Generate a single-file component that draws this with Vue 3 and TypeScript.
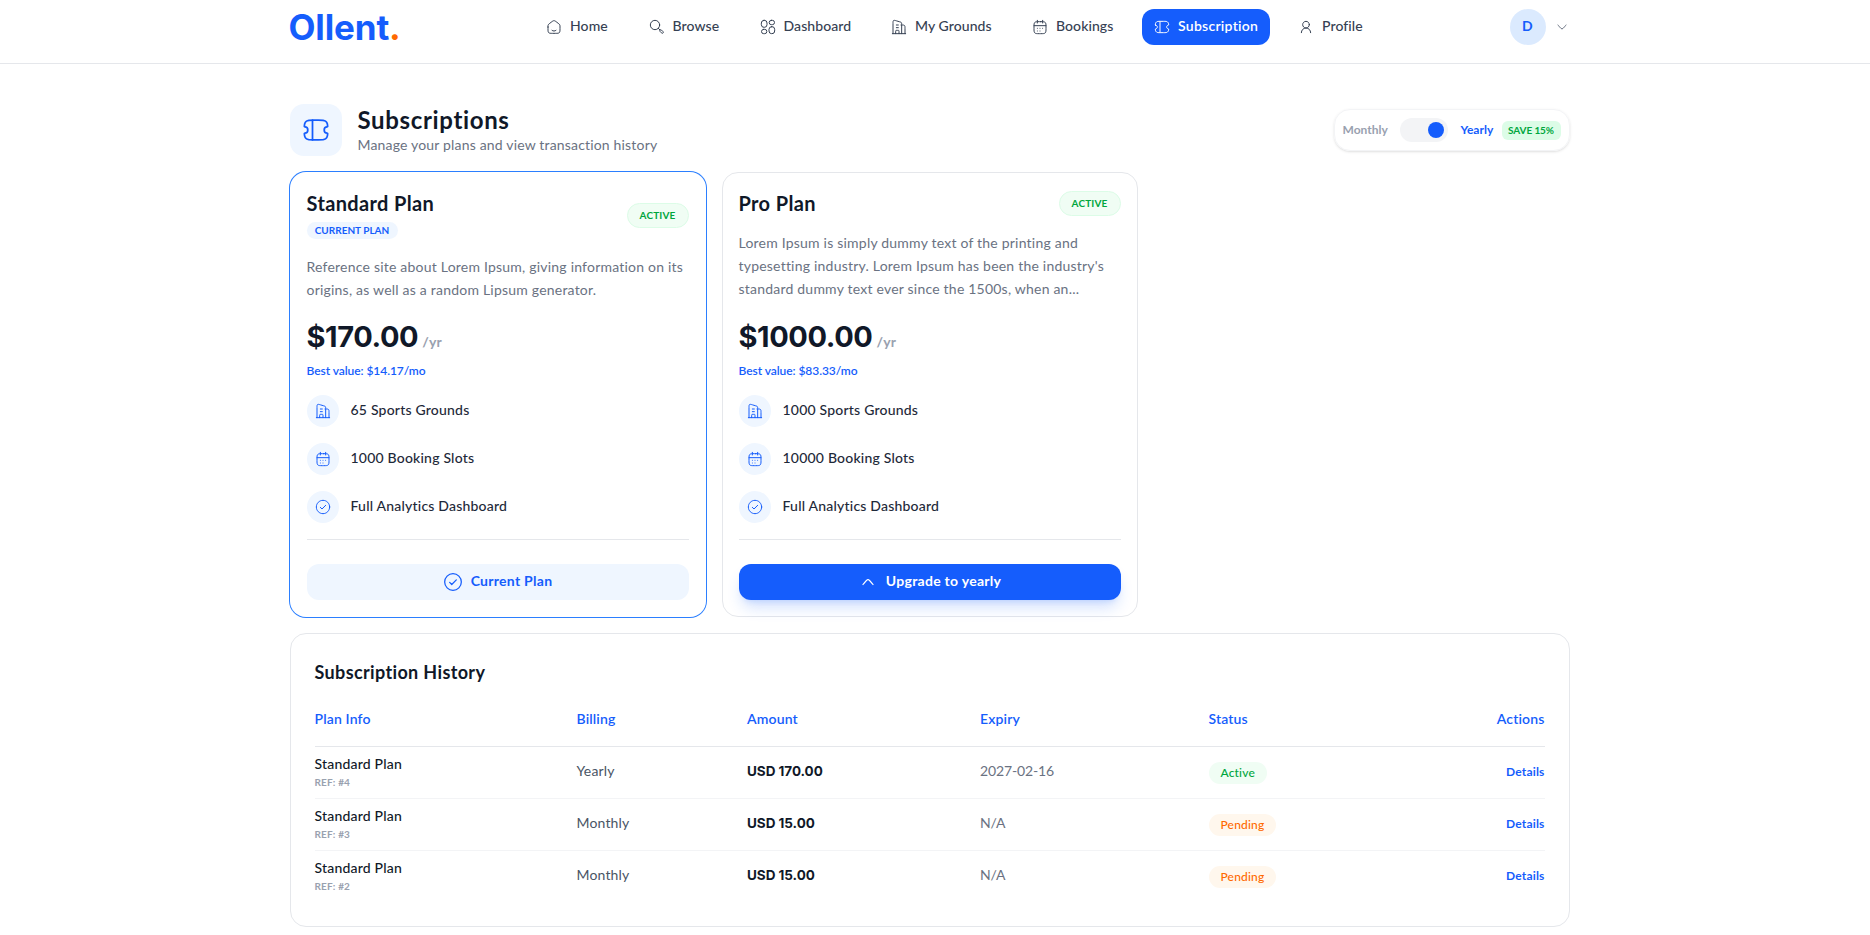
<script setup lang="ts">
import { defineComponent, h } from 'vue'

type IconName = 'home' | 'search' | 'grid' | 'building' | 'calendar' | 'ticket' | 'user' | 'check' | 'up' | 'down'

const shapes: Record<IconName, string[]> = {
  home: [
    'M3 11.99V14.5C3 17.8 3 19.45 4.025 20.475C5.05 21.5 6.7 21.5 10 21.5H14C17.3 21.5 18.95 21.5 19.975 20.475C21 19.45 21 17.8 21 14.5V11.99C21 10.31 21 9.47 20.644 8.742C20.288 8.014 19.625 7.498 18.299 6.467L16.299 4.911C14.236 3.307 13.204 2.5 12 2.5C10.796 2.5 9.764 3.307 7.701 4.911L5.701 6.467C4.375 7.498 3.712 8.014 3.356 8.742C3 9.47 3 10.31 3 11.99Z',
    'M15 17C14.2 17.622 13.15 18 12 18C10.85 18 9.8 17.622 9 17'
  ],
  search: [
    'M14 14L16.5 16.5',
    'M16.433 18.525C15.856 17.948 15.856 17.011 16.433 16.433C17.011 15.856 17.948 15.856 18.525 16.433L21.067 18.975C21.644 19.552 21.644 20.489 21.067 21.067C20.489 21.644 19.552 21.644 18.975 21.067Z',
    'M16 9C16 5.134 12.866 2 9 2C5.134 2 2 5.134 2 9C2 12.866 5.134 16 9 16C12.866 16 16 12.866 16 9Z'
  ],
  grid: [
    'M6 2H6.5A4 4 0 0 1 10.5 6V8.5A4 4 0 0 1 6.5 12.5H6A4 4 0 0 1 2 8.5V6A4 4 0 0 1 6 2Z',
    'M17 2H18.5A3.25 3.25 0 0 1 18.5 8.5H17A3.25 3.25 0 0 1 17 2Z',
    'M5.5 15.5H7A3.25 3.25 0 0 1 7 22H5.5A3.25 3.25 0 0 1 5.5 15.5Z',
    'M17.5 11.5H18A4 4 0 0 1 22 15.5V18A4 4 0 0 1 18 22H17.5A4 4 0 0 1 13.5 18V15.5A4 4 0 0 1 17.5 11.5Z'
  ],
  building: [
    'M2 22H22',
    'M3 22V6.717C3 4.203 3 2.947 3.79 2.323C4.58 1.7 5.742 2.045 8.066 2.736L13.066 4.222C14.468 4.639 15.168 4.847 15.584 5.42C16 5.993 16 6.746 16 8.252V22',
    'M15 9H15.9C18.3 9 19.5 9 20.25 9.732C21 10.464 21 11.643 21 14V22',
    'M8 9H11M8 13H11',
    'M12 22V19C12 18.057 12 17.586 11.707 17.293C11.414 17 10.943 17 10 17H9C8.057 17 7.586 17 7.293 17.293C7 17.586 7 18.057 7 19V22'
  ],
  calendar: [
    'M16 2V6M8 2V6',
    'M13 4H11C7.229 4 5.343 4 4.172 5.172C3 6.343 3 8.229 3 12V14C3 17.771 3 19.657 4.172 20.828C5.343 22 7.229 22 11 22H13C16.771 22 18.657 22 19.828 20.828C21 19.657 21 17.771 21 14V12C21 8.229 21 6.343 19.828 5.172C18.657 4 16.771 4 13 4Z',
    'M3 10H21',
    'M11.995 14H12.005M11.995 18H12.005M15.991 14H16M8 14H8.009M8 18H8.009'
  ],
  ticket: [
    'M2.464 9.344C2.216 9.344 1.989 9.142 2 8.879C2.067 7.337 2.255 6.333 2.78 5.539C3.082 5.082 3.457 4.683 3.889 4.362C5.057 3.494 6.704 3.494 10 3.494H14C17.296 3.494 18.943 3.494 20.111 4.362C20.543 4.683 20.918 5.082 21.22 5.539C21.745 6.333 21.933 7.337 22 8.879C22.011 9.142 21.784 9.344 21.536 9.344C20.152 9.344 19.03 10.533 19.03 12C19.03 13.467 20.152 14.656 21.536 14.656C21.784 14.656 22.011 14.858 22 15.121C21.933 16.663 21.745 17.667 21.22 18.461C20.918 18.918 20.543 19.317 20.111 19.638C18.943 20.506 17.296 20.506 14 20.506H10C6.704 20.506 5.057 20.506 3.889 19.638C3.457 19.317 3.082 18.918 2.78 18.461C2.255 17.667 2.067 16.663 2 15.121C1.989 14.858 2.216 14.656 2.464 14.656C3.848 14.656 4.97 13.467 4.97 12C4.97 10.533 3.848 9.344 2.464 9.344Z',
    'M9 3.5V20.5'
  ],
  user: [
    'M17 8.5C17 5.739 14.761 3.5 12 3.5C9.239 3.5 7 5.739 7 8.5C7 11.261 9.239 13.5 12 13.5C14.761 13.5 17 11.261 17 8.5Z',
    'M19 20.5C19 16.634 15.866 13.5 12 13.5C8.134 13.5 5 16.634 5 20.5'
  ],
  check: [
    'M22 12C22 6.477 17.523 2 12 2C6.477 2 2 6.477 2 12C2 17.523 6.477 22 12 22C17.523 22 22 17.523 22 12Z',
    'M8 12.5L10.5 15L16 9.5'
  ],
  up: ['M18 15C18 15 13.581 9 12 9C10.419 9 6 15 6 15'],
  down: ['M18 9C18 9 13.581 15 12 15C10.419 15 6 9 6 9']
}

const Icon = defineComponent({
  props: { name: { type: String, required: true }, size: { type: Number, default: 16 } },
  setup(props) {
    return () =>
      h(
        'svg',
        {
          width: props.size,
          height: props.size,
          viewBox: '0 0 24 24',
          fill: 'none',
          stroke: 'currentColor',
          'stroke-width': 1.5,
          'stroke-linecap': 'round',
          'stroke-linejoin': 'round'
        },
        shapes[props.name as IconName].map((d) => h('path', { d }))
      )
  }
})

interface NavItem { label: string; icon: IconName; active?: boolean }
const nav: NavItem[] = [
  { label: 'Home', icon: 'home' },
  { label: 'Browse', icon: 'search' },
  { label: 'Dashboard', icon: 'grid' },
  { label: 'My Grounds', icon: 'building' },
  { label: 'Bookings', icon: 'calendar' },
  { label: 'Subscription', icon: 'ticket', active: true },
  { label: 'Profile', icon: 'user' }
]

interface Plan {
  name: string
  current: boolean
  lines: string[]
  price: string
  value: string
  features: { icon: IconName; text: string }[]
}
const plans: Plan[] = [
  {
    name: 'Standard Plan',
    current: true,
    lines: ['Reference site about Lorem Ipsum, giving information on its', 'origins, as well as a random Lipsum generator.'],
    price: '$170.00',
    value: 'Best value: $14.17/mo',
    features: [
      { icon: 'building', text: '65 Sports Grounds' },
      { icon: 'calendar', text: '1000 Booking Slots' },
      { icon: 'check', text: 'Full Analytics Dashboard' }
    ]
  },
  {
    name: 'Pro Plan',
    current: false,
    lines: [
      'Lorem Ipsum is simply dummy text of the printing and',
      "typesetting industry. Lorem Ipsum has been the industry's",
      'standard dummy text ever since the 1500s, when an...'
    ],
    price: '$1000.00',
    value: 'Best value: $83.33/mo',
    features: [
      { icon: 'building', text: '1000 Sports Grounds' },
      { icon: 'calendar', text: '10000 Booking Slots' },
      { icon: 'check', text: 'Full Analytics Dashboard' }
    ]
  }
]

const columns = ['Plan Info', 'Billing', 'Amount', 'Expiry', 'Status', 'Actions']
const history = [
  { plan: 'Standard Plan', ref: '#4', billing: 'Yearly', amount: 'USD 170.00', expiry: '2027-02-16', status: 'Active' },
  { plan: 'Standard Plan', ref: '#3', billing: 'Monthly', amount: 'USD 15.00', expiry: 'N/A', status: 'Pending' },
  { plan: 'Standard Plan', ref: '#2', billing: 'Monthly', amount: 'USD 15.00', expiry: 'N/A', status: 'Pending' }
]
</script>

<template>
  <div class="page">
    <header class="topbar">
      <div class="container topbar-inner">
        <a class="logo">Ollent<span>.</span></a>
        <nav class="nav">
          <a v-for="n in nav" :key="n.label" class="nav-item" :class="{ active: n.active }">
            <Icon :name="n.icon" /><span>{{ n.label }}</span>
          </a>
        </nav>
        <div class="account">
          <span class="avatar"><span>D</span></span>
          <Icon name="down" />
        </div>
      </div>
    </header>

    <main class="container main">
      <div class="heading">
        <div class="tile"><Icon name="ticket" :size="28" /></div>
        <div class="heading-text">
          <h1>Subscriptions</h1>
          <p>Manage your plans and view transaction history</p>
        </div>
        <div class="billing">
          <span class="period">Monthly</span>
          <span class="switch"><i></i></span>
          <span class="period on">Yearly</span>
          <span class="save">SAVE 15%</span>
        </div>
      </div>

      <section class="plans">
        <article v-for="p in plans" :key="p.name" class="plan" :class="{ current: p.current }">
          <div class="plan-head">
            <div>
              <h2>{{ p.name }}</h2>
              <span v-if="p.current" class="chip">CURRENT PLAN</span>
            </div>
            <span class="state">ACTIVE</span>
          </div>
          <p class="desc"><span v-for="l in p.lines" :key="l">{{ l }}</span></p>
          <div class="bottom">
            <div class="price"><b>{{ p.price }}</b><span>/yr</span></div>
            <div class="value">{{ p.value }}</div>
            <ul class="features">
              <li v-for="f in p.features" :key="f.text">
                <span class="dot"><Icon :name="f.icon" /></span><span class="feature-text">{{ f.text }}</span>
              </li>
            </ul>
            <div class="action">
              <button class="btn" :class="p.current ? 'soft' : 'solid'">
                <Icon :name="p.current ? 'check' : 'up'" :size="20" />
                <span>{{ p.current ? 'Current Plan' : 'Upgrade to yearly' }}</span>
              </button>
            </div>
          </div>
        </article>
      </section>

      <section class="history">
        <h3>Subscription History</h3>
        <div class="row head">
          <span v-for="c in columns" :key="c">{{ c }}</span>
        </div>
        <div v-for="r in history" :key="r.ref" class="row">
          <div class="info">
            <div class="info-name">{{ r.plan }}</div>
            <div class="info-ref">REF: {{ r.ref }}</div>
          </div>
          <span class="bill">{{ r.billing }}</span>
          <span class="amount">{{ r.amount }}</span>
          <span class="expiry">{{ r.expiry }}</span>
          <span class="status"><em class="tag" :class="r.status.toLowerCase()">{{ r.status }}</em></span>
          <a class="details">Details</a>
        </div>
      </section>
    </main>
  </div>
</template>

<style>
body { margin: 0; background: #fff; overflow: hidden; }
</style>

<style scoped>
.page {
  font-family: Lato, "Open Sans", sans-serif;
  font-size: 14px;
  line-height: 20px;
  color: #101828;
  letter-spacing: 0.012em;
  height: 935px;
  overflow: hidden;
}
* { box-sizing: border-box; }
h1, h2, h3, p, ul { margin: 0; padding: 0; }
svg { display: block; flex: none; }
.container { width: 1280px; margin-left: calc((100% - 1291px) / 2); }

.topbar { height: 64px; border-bottom: 1px solid #e5e7eb; }
.topbar-inner {
  display: grid;
  grid-template-columns: 244.5px 1fr auto;
  align-items: center;
  height: 54px;
}
.logo {
  margin-left: -1px;
  font: 700 35px/40px Inter, sans-serif;
  letter-spacing: -0.004em;
  color: #155dfc;
}
.logo span { color: #ff6900; }
.nav {
  display: grid;
  grid-template-columns: 102.5px 111px 131.5px 141px 122px 144px 88px;
}
.nav-item {
  display: flex;
  align-items: center;
  gap: 8px;
  justify-self: start;
  height: 36px;
  padding: 0 12px;
  border-radius: 12px;
  font-weight: 500;
  color: #364153;
  letter-spacing: 0.006em;
}
.nav-item span, .avatar span, .btn span, .feature-text { padding-bottom: 2px; }
.nav-item.active {
  width: 128px;
  background: #155dfc;
  color: #fff;
  font-weight: 600;
  letter-spacing: 0.019em;
}
.account { display: flex; align-items: center; gap: 8px; color: #6a7282; }
.avatar {
  display: grid;
  place-items: center;
  width: 36px;
  height: 36px;
  border-radius: 50%;
  background: #dbeafe;
  color: #155dfc;
  font-weight: 700;
}

.main { padding-top: 40px; }
.heading { display: flex; align-items: center; height: 52px; }
.tile {
  display: grid;
  place-items: center;
  width: 52px;
  height: 52px;
  border-radius: 14px;
  background: #eff6ff;
  color: #155dfc;
}
.heading-text { margin-left: 16px; flex: 1; }
.heading-text h1 { font-size: 24px; line-height: 32px; font-weight: 700; letter-spacing: 0.027em; }
.heading-text p { margin-top: -1px; padding-bottom: 1px; color: #6a7282; letter-spacing: 0.0125em; }
.billing {
  display: flex;
  align-items: center;
  width: 236px;
  height: 42px;
  padding: 0 8px;
  border: 1px solid #f3f4f6;
  border-radius: 16px;
  box-shadow: 0 1px 3px rgba(0, 0, 0, 0.1), 0 1px 2px -1px rgba(0, 0, 0, 0.1);
}
.period { width: 57px; font-size: 12px; line-height: 16px; font-weight: 700; color: #99a1af; letter-spacing: 0; }
.period.on { width: 41px; color: #155dfc; }
.switch { width: 48px; height: 24px; padding: 4px; margin-right: 13px; border-radius: 12px; background: #f3f4f6; }
.switch i { display: block; width: 16px; height: 16px; margin-left: 24px; border-radius: 50%; background: #155dfc; }
.save {
  flex: none;
  width: 59px;
  text-align: center;
  font-size: 10px;
  line-height: 19px;
  font-weight: 700;
  letter-spacing: -0.01em;
  border-radius: 6px;
  color: #00a63e;
  background: #dcfce7;
}

.plans { display: grid; grid-template-columns: repeat(3, 1fr); gap: 16px; margin-top: 16px; }
.plan {
  display: flex;
  flex-direction: column;
  height: 445px;
  padding: 16px;
  border: 1px solid #e5e7eb;
  border-radius: 16px;
}
.plan.current { border-color: transparent; box-shadow: 0 0 0 1px #2b7fff; }
.plan-head { display: flex; justify-content: space-between; align-items: center; }
.plan h2 { font-size: 20px; line-height: 28px; font-weight: 700; letter-spacing: 0.018em; }
.chip {
  display: block;
  width: 91px;
  margin: 5px 0 2px;
  text-align: center;
  font-size: 10px;
  line-height: 17px;
  font-weight: 700;
  letter-spacing: 0;
  border-radius: 9px;
  color: #155dfc;
  background: #eff6ff;
}
.state {
  width: 62px;
  text-align: center;
  font-size: 10px;
  line-height: 23px;
  font-weight: 700;
  border: 1px solid #dcfce7;
  border-radius: 13px;
  color: #00a63e;
  background: #f0fdf4;
}
.desc { margin-top: 14px; line-height: 23px; color: #6a7282; letter-spacing: 0.0152em; white-space: nowrap; }
.desc span { display: block; }
.bottom { margin-top: auto; }
.price { display: flex; align-items: baseline; gap: 4px; height: 36px; line-height: 36px; }
.price b { font: 650 29px/36px Inter, sans-serif; letter-spacing: -0.014em; }
.price span { font-weight: 700; color: #99a1af; letter-spacing: 0.01em; }
.value { margin-top: 8px; font-size: 12px; line-height: 16px; font-weight: 600; color: #155dfc; letter-spacing: -0.005em; }
.features { list-style: none; display: grid; gap: 16px; margin-top: 16px; }
.features li { display: flex; align-items: center; gap: 12px; font-weight: 500; color: #1e2939; letter-spacing: 0.0148em; }
.dot { display: grid; place-items: center; width: 32px; height: 32px; border-radius: 50%; background: #eff6ff; color: #155dfc; }
.action { margin-top: 16px; padding-top: 24px; border-top: 1px solid #e5e7eb; }
.btn {
  display: flex;
  align-items: center;
  justify-content: center;
  gap: 8px;
  width: 100%;
  height: 36px;
  padding: 0;
  border: 0;
  border-radius: 12px;
  font: inherit;
  font-weight: 700;
  letter-spacing: 0.02em;
}
.btn.soft { color: #155dfc; background: #eff6ff; }
.btn.solid {
  color: #fff;
  background: #155dfc;
  box-shadow: 0 10px 15px -3px rgba(21, 93, 252, 0.2), 0 4px 6px -4px rgba(21, 93, 252, 0.2);
}

.history { height: 294px; margin-top: 16px; padding: 24px; border: 1px solid #e5e7eb; border-radius: 16px; }
.history h3 { font-size: 18px; line-height: 28px; font-weight: 700; letter-spacing: 0.02em; }
.row {
  display: grid;
  grid-template-columns: 262px 170.5px 233px 228.5px 1fr auto;
  align-items: center;
  height: 52px;
  padding-bottom: 2px;
  border-bottom: 1px solid #f3f4f6;
}
.row:last-child { border-bottom: 0; padding-bottom: 3px; }
.row.head {
  height: 61px;
  padding: 6px 0 0;
  border-color: #e5e7eb;
  font-weight: 600;
  color: #155dfc;
  letter-spacing: 0.011em;
}
.info-name { font-weight: 500; letter-spacing: 0.014em; }
.info-ref { margin-top: 1px; font-size: 10px; line-height: 15px; font-weight: 700; color: #99a1af; letter-spacing: 0.018em; }
.bill, .amount, .expiry { padding-bottom: 1px; }
.bill { color: #4a5565; }
.amount { font: 650 13.5px/20px Inter, sans-serif; letter-spacing: -0.003em; }
.expiry { color: #6a7282; letter-spacing: -0.01em; }
.status { line-height: 22px; }
.tag {
  display: block;
  width: max-content;
  margin-top: 2px;
  padding: 0 12px;
  font-style: normal;
  font-size: 12px;
  line-height: 22px;
  font-weight: 500;
  border-radius: 11px;
}
.tag.active { color: #00a63e; background: #f0fdf4; }
.tag.pending { color: #ff6900; background: #fff7ed; }
.details { font-size: 12px; line-height: 16px; font-weight: 700; color: #155dfc; }
</style>
